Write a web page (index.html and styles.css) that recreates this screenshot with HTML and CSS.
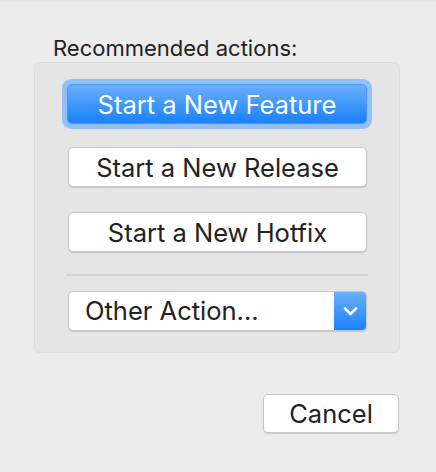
FILE: index.html
```html
<!DOCTYPE html>
<html>
<head>
<meta charset="utf-8">
<link rel="stylesheet" href="styles.css">
</head>
<body>
<div class="topstrip"></div>
<div class="dialog">
  <div class="label">Recommended actions:</div>
  <div class="group">
    <div class="focus-ring"><button class="btn primary">Start a New Feature</button></div>
    <button class="btn">Start a New Release</button>
    <button class="btn">Start a New Hotfix</button>
    <div class="sep"></div>
    <div class="popup">
      <span class="popup-text">Other Action...</span>
      <span class="popup-arrow"><svg width="15" height="10" viewBox="0 0 15 10"><path d="M2 2.5 L7.5 8 L13 2.5" fill="none" stroke="#fff" stroke-width="2.6" stroke-linecap="round" stroke-linejoin="round"/></svg></span>
    </div>
  </div>
  <div class="footer">
    <button class="btn cancel">Cancel</button>
  </div>
</div>
</body>
</html>
```
FILE: styles.css
```css
html, body {
  margin: 0;
  padding: 0;
}
body {
  background: #ececec;
  width: 436px;
  height: 472px;
  overflow: hidden;
  font-family: Inter, "Liberation Sans", Arial, sans-serif;
  color: #222;
}
.topstrip {
  height: 2px;
  background: #e6e6e6;
}
.dialog {
  padding: 33px 0 0 34px;
}
.label {
  font-size: 22px;
  padding-left: 19px;
  line-height: 26px;
  margin-bottom: 1px;
}
.group {
  width: 366px;
  height: 291px;
  box-sizing: border-box;
  border: 1px solid #dcdcdc;
  border-radius: 6px;
  background: #e5e5e5;
  display: flex;
  flex-direction: column;
  align-items: flex-start;
  padding: 16px 0 0 26px;
}
.focus-ring {
  padding: 5px;
  border-radius: 9px;
  background: #92c0f4;
  margin-left: 1px;
}
.btn {
  display: block;
  font-family: Inter, "Liberation Sans", Arial, sans-serif;
  font-size: 25.5px;
  color: #222;
  width: 299px;
  height: 40px;
  box-sizing: border-box;
  border: 1px solid #c6c6c6;
  border-radius: 5px;
  background: #fff;
  box-shadow: 0 1px 1px rgba(0,0,0,0.15);
  padding: 0;
  margin: 0;
}
.btn.primary {
  width: 300px;
  color: #fff;
  border: 1px solid #4a94f5;
  background: linear-gradient(#69b1fa, #1a80fb);
  box-shadow: none;
}
.group > .btn {
  margin-left: 7px;
}
.focus-ring + .btn {
  margin-top: 18px;
}
.btn + .btn {
  margin-top: 25px;
}
.sep {
  width: 302px;
  height: 2px;
  background: #d2d2d2;
  margin: 22px 0 0 5px;
}
.popup {
  margin: 15px 0 0 7px;
  width: 299px;
  height: 40px;
  box-sizing: border-box;
  border: 1px solid #c6c6c6;
  border-radius: 5px;
  background: #fff;
  box-shadow: 0 1px 1px rgba(0,0,0,0.15);
  display: flex;
  align-items: stretch;
  overflow: hidden;
}
.popup-text {
  flex: 1;
  font-size: 25.5px;
  line-height: 38px;
  padding-left: 16px;
}
.popup-arrow {
  width: 33px;
  background: linear-gradient(#69b1fa, #1a80fb);
  display: flex;
  align-items: center;
  justify-content: center;
  margin: -1px -1px -1px 0;
}
.footer {
  display: flex;
  justify-content: flex-end;
  width: 364px;
  margin-top: 41px;
}
.btn.cancel {
  width: 136px;
  height: 39px;
  margin-right: -1px;
}
```
